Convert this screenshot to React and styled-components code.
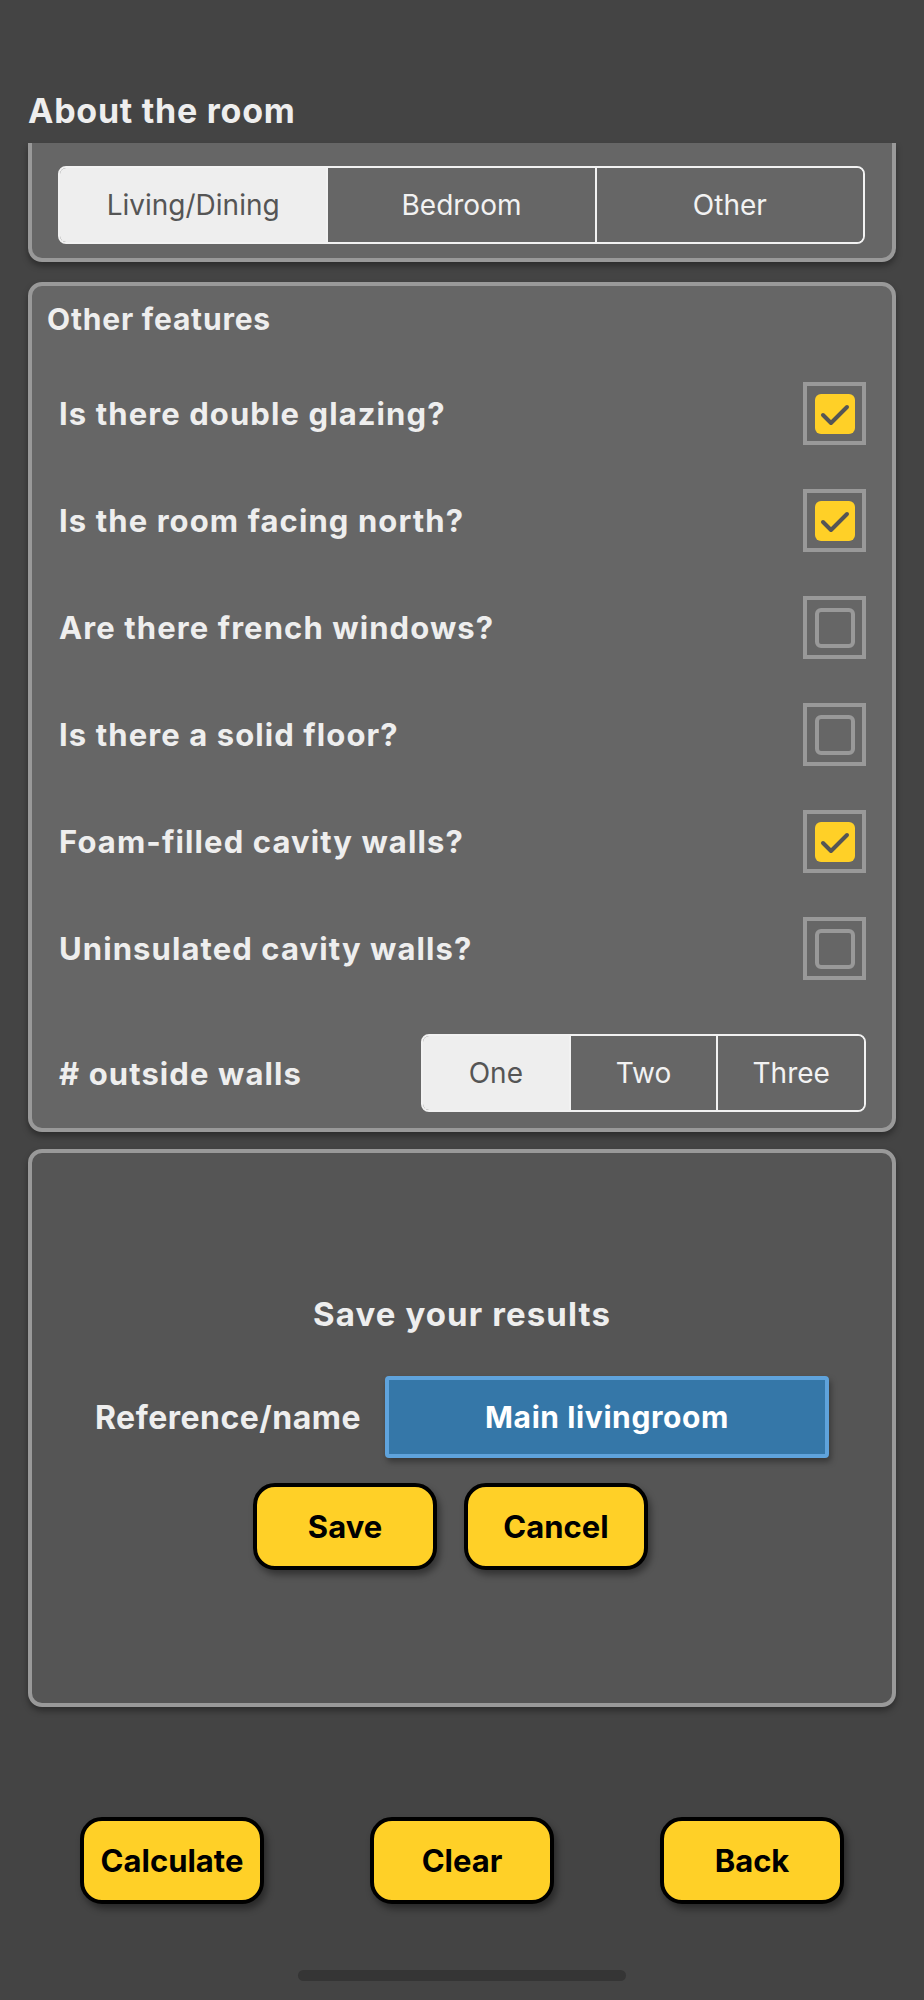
import React from 'react';
import styled, { createGlobalStyle } from 'styled-components';

const GlobalStyle = createGlobalStyle`
  body {
    margin: 0;
    background-color: #444444;
    font-family: Inter, "Noto Sans", sans-serif;
    color: #eeeeee;
  }
`;

const Page = styled.div`
  width: 924px;
  min-height: 2000px;
  display: flex;
  flex-direction: column;
  padding-top: 90px;
  box-sizing: border-box;
`;

const PageTitle = styled.h1`
  margin: 0 0 12px 28px;
  font-size: 34px;
  line-height: 41px;
  font-weight: 700;
  letter-spacing: 0.75px;
  color: #eeeeee;
`;

const Card = styled.section`
  margin: 0 28px;
  background-color: ${(p) => p.$bg || '#666666'};
  border: 4px solid #999999;
  border-radius: 14px;
  box-shadow: 0 4px 6px rgba(0, 0, 0, 0.35);
  box-sizing: border-box;
`;

// top of the first card is scrolled under the header
const ClippedCard = styled(Card)`
  border-top: none;
  border-radius: 0 0 14px 14px;
  padding: 23px 27px 14px 26px;
`;

const FeaturesCard = styled(Card)`
  margin-top: 20px;
  padding: 15px 26px 16px 15px;
`;

const SaveCard = styled(Card)`
  margin-top: 17px;
  height: 558px;
  display: flex;
  flex-direction: column;
  align-items: center;
  padding-top: 141px;
`;

const CardTitle = styled.h2`
  margin: 0 0 23px;
  font-size: 30px;
  line-height: 36px;
  font-weight: 700;
  letter-spacing: 0.8px;
  color: #eeeeee;
`;

const Segmented = styled.div`
  display: flex;
  width: ${(p) => p.$width}px;
  height: 78px;
  border: 2px solid #f2f2f2;
  border-radius: 8px;
  overflow: hidden;
  box-sizing: border-box;
`;

const Segment = styled.div`
  flex: 1;
  display: flex;
  align-items: center;
  justify-content: center;
  font-size: 28px;
  font-weight: 400;
  background-color: ${(p) => (p.$active ? '#eeeeee' : '#666666')};
  color: ${(p) => (p.$active ? '#555555' : '#f2f2f2')};
  & + & {
    border-left: 2px solid #f2f2f2;
  }
`;

const Row = styled.div`
  height: 107px;
  display: flex;
  align-items: center;
  justify-content: space-between;
  padding-left: 12px;
`;

const WallsRow = styled(Row)`
  height: 78px;
  margin-top: 32px;
`;

const RowLabel = styled.span`
  font-size: 31px;
  font-weight: 700;
  letter-spacing: 1.1px;
  color: #eeeeee;
`;

const CheckOuter = styled.div`
  width: 63px;
  height: 63px;
  border: 4px solid #999999;
  box-sizing: border-box;
  display: flex;
  align-items: center;
  justify-content: center;
`;

const CheckInner = styled.div`
  width: 40px;
  height: 40px;
  border-radius: 6px;
  box-sizing: border-box;
  background-color: ${(p) => (p.$checked ? '#ffd027' : 'transparent')};
  border: ${(p) => (p.$checked ? 'none' : '4px solid #999999')};
  display: flex;
  align-items: center;
  justify-content: center;
`;

const SaveTitle = styled.h2`
  margin: 0 0 42px;
  font-size: 33px;
  line-height: 40px;
  font-weight: 700;
  letter-spacing: 1.1px;
  color: #eeeeee;
`;

const RefRow = styled.div`
  display: flex;
  align-items: center;
  gap: 24px;
`;

const RefLabel = styled.span`
  font-size: 32px;
  font-weight: 700;
  letter-spacing: 0.5px;
  color: #eeeeee;
`;

const NameInput = styled.div`
  width: 444px;
  height: 82px;
  box-sizing: border-box;
  background-color: #3577a8;
  border: 4px solid #5fa3dc;
  border-radius: 4px;
  display: flex;
  align-items: center;
  justify-content: center;
  font-size: 30px;
  font-weight: 700;
  letter-spacing: 0.6px;
  color: #ffffff;
  box-shadow: 2px 4px 6px rgba(0, 0, 0, 0.35);
`;

const ButtonRow = styled.div`
  display: flex;
  gap: 27px;
  margin-top: 25px;
  padding-right: 23px;
`;

const YellowButton = styled.button`
  width: 184px;
  height: 87px;
  box-sizing: border-box;
  background-color: #ffd027;
  border: 4px solid #000000;
  border-radius: 22px;
  font-family: Inter, "Noto Sans", sans-serif;
  font-size: 31px;
  font-weight: 700;
  color: #000000;
  box-shadow: 3px 5px 7px rgba(0, 0, 0, 0.4);
  cursor: pointer;
`;

const Footer = styled.div`
  display: flex;
  justify-content: space-between;
  padding: 0 80px;
  margin-top: 110px;
`;

const HomeBar = styled.div`
  width: 328px;
  height: 11px;
  border-radius: 6px;
  background-color: #353535;
  margin: 66px auto 0;
`;

const Checkbox = ({ checked }) => (
  <CheckOuter>
    <CheckInner $checked={checked}>
      {checked && (
        <svg width="40" height="40" viewBox="0 0 40 40">
          <path
            d="M8 21 L16 29 L32 13"
            fill="none"
            stroke="#555555"
            strokeWidth="4"
            strokeLinecap="round"
            strokeLinejoin="round"
          />
        </svg>
      )}
    </CheckInner>
  </CheckOuter>
);

const features = [
  { label: 'Is there double glazing?', checked: true },
  { label: 'Is the room facing north?', checked: true },
  { label: 'Are there french windows?', checked: false },
  { label: 'Is there a solid floor?', checked: false },
  { label: 'Foam-filled cavity walls?', checked: true },
  { label: 'Uninsulated cavity walls?', checked: false },
];

const App = () => {
  return (
    <>
      <GlobalStyle />
      <Page>
        <PageTitle>About the room</PageTitle>

        <ClippedCard>
          <Segmented $width={807}>
            <Segment $active>Living/Dining</Segment>
            <Segment>Bedroom</Segment>
            <Segment>Other</Segment>
          </Segmented>
        </ClippedCard>

        <FeaturesCard>
          <CardTitle>Other features</CardTitle>
          {features.map((f) => (
            <Row key={f.label}>
              <RowLabel>{f.label}</RowLabel>
              <Checkbox checked={f.checked} />
            </Row>
          ))}
          <WallsRow>
            <RowLabel># outside walls</RowLabel>
            <Segmented $width={445}>
              <Segment $active>One</Segment>
              <Segment>Two</Segment>
              <Segment>Three</Segment>
            </Segmented>
          </WallsRow>
        </FeaturesCard>

        <SaveCard $bg="#555555">
          <SaveTitle>Save your results</SaveTitle>
          <RefRow>
            <RefLabel>Reference/name</RefLabel>
            <NameInput>Main livingroom</NameInput>
          </RefRow>
          <ButtonRow>
            <YellowButton>Save</YellowButton>
            <YellowButton>Cancel</YellowButton>
          </ButtonRow>
        </SaveCard>

        <Footer>
          <YellowButton>Calculate</YellowButton>
          <YellowButton>Clear</YellowButton>
          <YellowButton>Back</YellowButton>
        </Footer>

        <HomeBar />
      </Page>
    </>
  );
};

export default App;
